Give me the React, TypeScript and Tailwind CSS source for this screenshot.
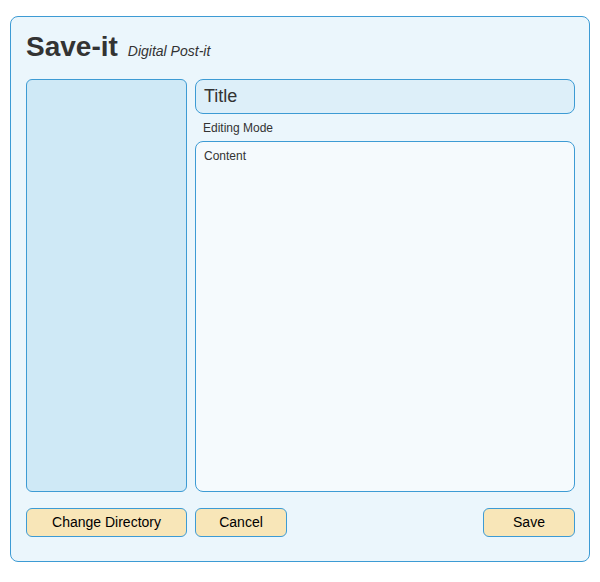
import React from "react";

export default function App() {
  return (
    <div className="w-[600px] h-[582px] bg-white pt-4 px-[10px] font-['Liberation_Sans',Arial,sans-serif] text-[#333]">
      <div className="w-[580px] h-[546px] border border-[#3d9bd4] rounded-lg bg-[#ebf6fc] pl-[15px] pr-[14px] pt-[13px] flex flex-col">
        <div className="flex items-baseline gap-[10px] h-[38px]">
          <span className="text-[28px] font-bold leading-[34px]">Save-it</span>
          <span className="text-[14px] italic">Digital Post-it</span>
        </div>
        <div className="flex gap-2 mt-[11px] h-[413px]">
          <div className="w-[161px] h-full border border-[#3d9bd4] rounded-md bg-[#cfe9f6]" />
          <div className="flex-1 flex flex-col">
            <div className="h-[35px] border border-[#3d9bd4] rounded-lg bg-[#ddeff9] px-2 flex items-center text-[18px]">Title</div>
            <div className="text-[12px] pl-2 pt-[7px] h-[27px] leading-[14px]">Editing Mode</div>
            <div className="flex-1 border border-[#3d9bd4] rounded-lg bg-[#f5fafd] px-2 pt-[7px] text-[12px] leading-[14px]">Content</div>
          </div>
        </div>
        <div className="flex gap-2 mt-4 h-[29px]">
          <button className="w-[161px] h-full border border-[#3d9bd4] rounded-md bg-[#f8e6b8] text-[14px] text-black">Change Directory</button>
          <button className="w-[92px] h-full border border-[#3d9bd4] rounded-md bg-[#f8e6b8] text-[14px] text-black">Cancel</button>
          <div className="flex-1" />
          <button className="w-[92px] h-full border border-[#3d9bd4] rounded-md bg-[#f8e6b8] text-[14px] text-black">Save</button>
        </div>
      </div>
    </div>
  );
}
